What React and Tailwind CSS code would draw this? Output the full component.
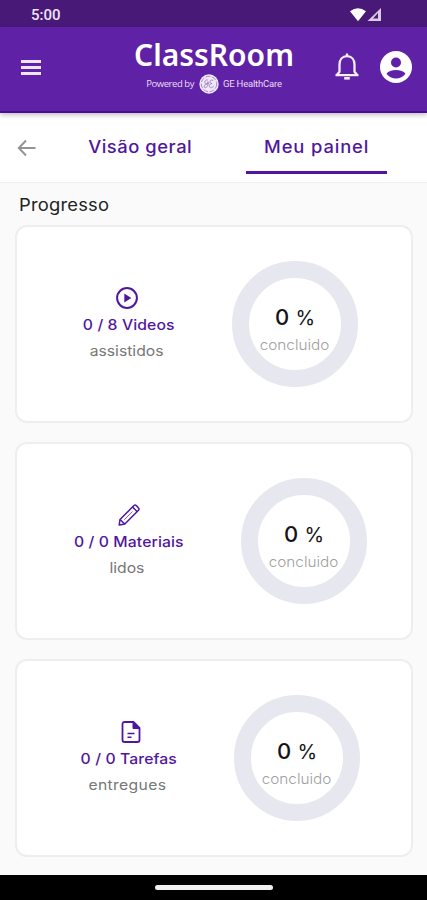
const CARDS = [
  { id: 'videos', count: '0 / 8 Videos', label: 'assistidos', icon: PlayIcon, iconShift: '-ml-1', labelSpacing: 'tracking-normal', gap: 'ml-[47px]' },
  { id: 'materials', count: '0 / 0 Materiais', label: 'lidos', icon: PencilIcon, iconShift: 'ml-0', labelSpacing: 'tracking-normal', gap: 'ml-[56px]' },
  { id: 'tasks', count: '0 / 0 Tarefas', label: 'entregues', icon: FileIcon, iconShift: 'ml-[3px]', labelSpacing: 'tracking-[0.3px]', gap: 'ml-[49px]' },
]

function PlayIcon() {
  return (
    <svg width="24" height="24" viewBox="0 0 24 24" fill="none">
      <circle cx="12" cy="12" r="9.9" stroke="#5116a0" strokeWidth="2" />
      <path d="M9.3 7.5v9l7-4.5z" fill="#5116a0" />
    </svg>
  )
}

function PencilIcon() {
  return (
    <svg width="24" height="24" viewBox="0 0 24 24" fill="none" stroke="#5116a0" strokeWidth="1.5" strokeLinejoin="round">
      <path d="M2.2 22l.8-5.5L17 2.500q1.200-1 2.500.2l2 2.200q1 1.200 0 2.400L7.800 21z" />
      <path d="M15.500 4l4.800 4.800M3 16.500L7.800 21" />
      <path d="M7.200 16.800l8.300-8.300" strokeWidth="0.7" />
    </svg>
  )
}

function FileIcon() {
  return (
    <svg width="24" height="24" viewBox="0 0 24 24" fill="none" stroke="#5116a0" strokeWidth="1.8" strokeLinejoin="round">
      <path d="M14.500 2H5.500A2 2 0 0 0 3.500 4v16a2 2 0 0 0 2 2h13a2 2 0 0 0 2-2V8z" />
      <path d="M14 2v6.500h6.500z" fill="#5116a0" strokeWidth="1" />
      <path d="M8.500 13.500h7M8.500 17.200h4" strokeWidth="1.6" />
    </svg>
  )
}

function StatusBar() {
  return (
    <div className="flex h-[27px] items-center justify-between bg-[#491978] pl-[31px] pr-[44px] pt-[4px]">
      <span className="font-[Roboto] text-[15px] font-medium leading-none text-[#eee6f6]">5:00</span>
      <svg width="34" height="16" viewBox="0 0 34 16" className="-mt-0.5">
        <path d="M1 4.200Q9 -1.700 17 4.200L9 14.200z" fill="#fff" />
        <path d="M32 1v13H18.500z" fill="#d9cce5" />
        <path d="M29 6v5.500h-5z" fill="#491978" />
      </svg>
    </div>
  )
}

function Monogram() {
  return (
    <svg width="20" height="20" viewBox="0 0 20 20">
      <circle cx="10" cy="10" r="9.7" fill="#f1e9f8" />
      <g fill="none" stroke="#8a5fbd" strokeWidth="0.7">
        <circle cx="10" cy="10" r="7.7" strokeDasharray="5 1.5" />
        <path d="M9 6.500C7.500 4.500 5 7.500 6 9.500c1 1.400 3-.5 3-2M9 8c.5 3-1 6-3 5.700-1.500-.4-1-2.500.5-3L10 9M14 7c-.5-2-3-1-3 1 0 1 1 1.500 2 1.500-2 0-3 1.500-2.500 3.200.6 1.700 3.500 1.400 4-1" />
      </g>
    </svg>
  )
}

function Header() {
  return (
    <header className="relative z-10 flex h-[86px] items-start border-b-2 border-[#4b0b97] bg-[#5f21a5] shadow-[0_2px_5px_rgba(0,0,0,0.25)]">
      <div className="ml-[21px] mt-[33px] flex w-5 flex-col gap-[3px]">
        <span className="h-[3px] bg-[#eee6f7]" />
        <span className="h-[3px] bg-[#eee6f7]" />
        <span className="h-[3px] bg-[#eee6f7]" />
      </div>
      <div className="ml-[92px] mt-[11px] flex w-[162px] flex-col items-center text-white">
        <h1 className="whitespace-nowrap font-['Noto_Sans'] text-[30px] font-semibold leading-[34px]">ClassRoom</h1>
        <div className="mt-[2px] flex items-center whitespace-nowrap font-['Open_Sans'] text-[9.5px] leading-5 text-[#e9ddf5]">
          <span className="mr-[5px] tracking-[-0.45px]">Powered by</span>
          <Monogram />
          <span className="ml-1 font-[Roboto] tracking-[-0.2px]">GE HealthCare</span>
        </div>
      </div>
      <svg className="ml-[37px] mt-[23px]" width="30" height="32" viewBox="0 0 30 32" fill="none" stroke="#f5effa" strokeWidth="2.3" strokeLinejoin="round">
        <path d="M3.500 25.200h23M5 24.800l2.500-3V14.500c0-5 3-8.300 7.500-8.300s7.500 3.300 7.500 8.300v7.300l2.500 3" />
        <path d="M15 3.500v3" />
        <path d="M12.200 28.300h5.600" strokeWidth="2.6" />
      </svg>
      <svg className="ml-[18px] mt-[24px]" width="32" height="32" viewBox="0 0 32 32">
        <circle cx="16" cy="16" r="16" fill="#fff" />
        <circle cx="16" cy="11.5" r="5" fill="#5f21a5" />
        <path d="M6.500 22.700c3.200-5 15.800-5 19 0-4.200 6.300-14.800 6.300-19 0z" fill="#5f21a5" />
      </svg>
    </header>
  )
}

function Tabs() {
  return (
    <nav className="flex h-[70px] border-b border-[#eeeef0] bg-white text-[17px] font-medium leading-5 text-[#5116a0]">
      <svg className="ml-[17px] mt-[26px]" width="20" height="18" viewBox="0 0 20 18" fill="none" stroke="#949494" strokeWidth="2">
        <path d="M18.500 9H2.500M9 1.500L1.800 9 9 16.500" />
      </svg>
      <div className="ml-[33px] flex w-[140px] justify-center pt-[24px]">
        <span className="scale-x-[1.08] whitespace-nowrap tracking-[0.5px]">Visão geral</span>
      </div>
      <div className="ml-[36px] flex h-[61px] w-[141px] justify-center border-b-[3px] border-[#5116a0] pt-[24px]">
        <span className="scale-x-[1.08] whitespace-nowrap tracking-[0.8px]">Meu painel</span>
      </div>
    </nav>
  )
}

function ProgressRing() {
  return (
    <div className="flex size-[126px] shrink-0 flex-col items-center rounded-full border-[17px] border-[#e7e8ef] pt-[27px]">
      <div className="whitespace-nowrap text-[22px] leading-6 text-[#151515]">
        <span className="font-medium">0</span> <span className="text-[20px]">%</span>
      </div>
      <div className="mt-[7px] scale-x-[1.07] whitespace-nowrap text-[14.3px] font-light leading-4 text-[#a0a0a0]">concluido</div>
    </div>
  )
}

function ProgressCard({ card }) {
  const Icon = card.icon
  return (
    <section className="flex h-[198px] items-start rounded-[12px] border-2 border-[#eeeeef] bg-white pl-14 pt-[34px]">
      <div className="mt-[25px] flex w-[112px] flex-col items-center">
        <div className={card.iconShift}><Icon /></div>
        <div className="mt-[5px] scale-x-110 whitespace-nowrap text-[14.3px] font-medium leading-5 tracking-[0.1px] text-[#5116a0]">{card.count}</div>
        <div className={`-ml-1 mt-[6px] scale-x-110 whitespace-nowrap text-[14.3px] leading-5 text-[#777] ${card.labelSpacing}`}>{card.label}</div>
      </div>
      <div className={card.gap}><ProgressRing /></div>
    </section>
  )
}

export default function App() {
  return (
    <div className="flex h-[900px] w-[427px] flex-col overflow-hidden bg-[#fafafa] font-[Inter,sans-serif]">
      <StatusBar />
      <Header />
      <Tabs />
      <main className="flex-1 pl-[15px] pr-[14px]">
        <h2 className="ml-[4px] mt-[11px] h-[31px] origin-left scale-x-[1.08] text-[17px] leading-[22px] tracking-[0.2px] text-[#222]">Progresso</h2>
        <div className="flex flex-col gap-[19px]">
          {CARDS.map(card => <ProgressCard key={card.id} card={card} />)}
        </div>
      </main>
      <footer className="flex h-[25px] shrink-0 justify-center bg-black pt-[10px]">
        <div className="h-[5px] w-[118px] rounded-full bg-[#f1f1f1]" />
      </footer>
    </div>
  )
}
